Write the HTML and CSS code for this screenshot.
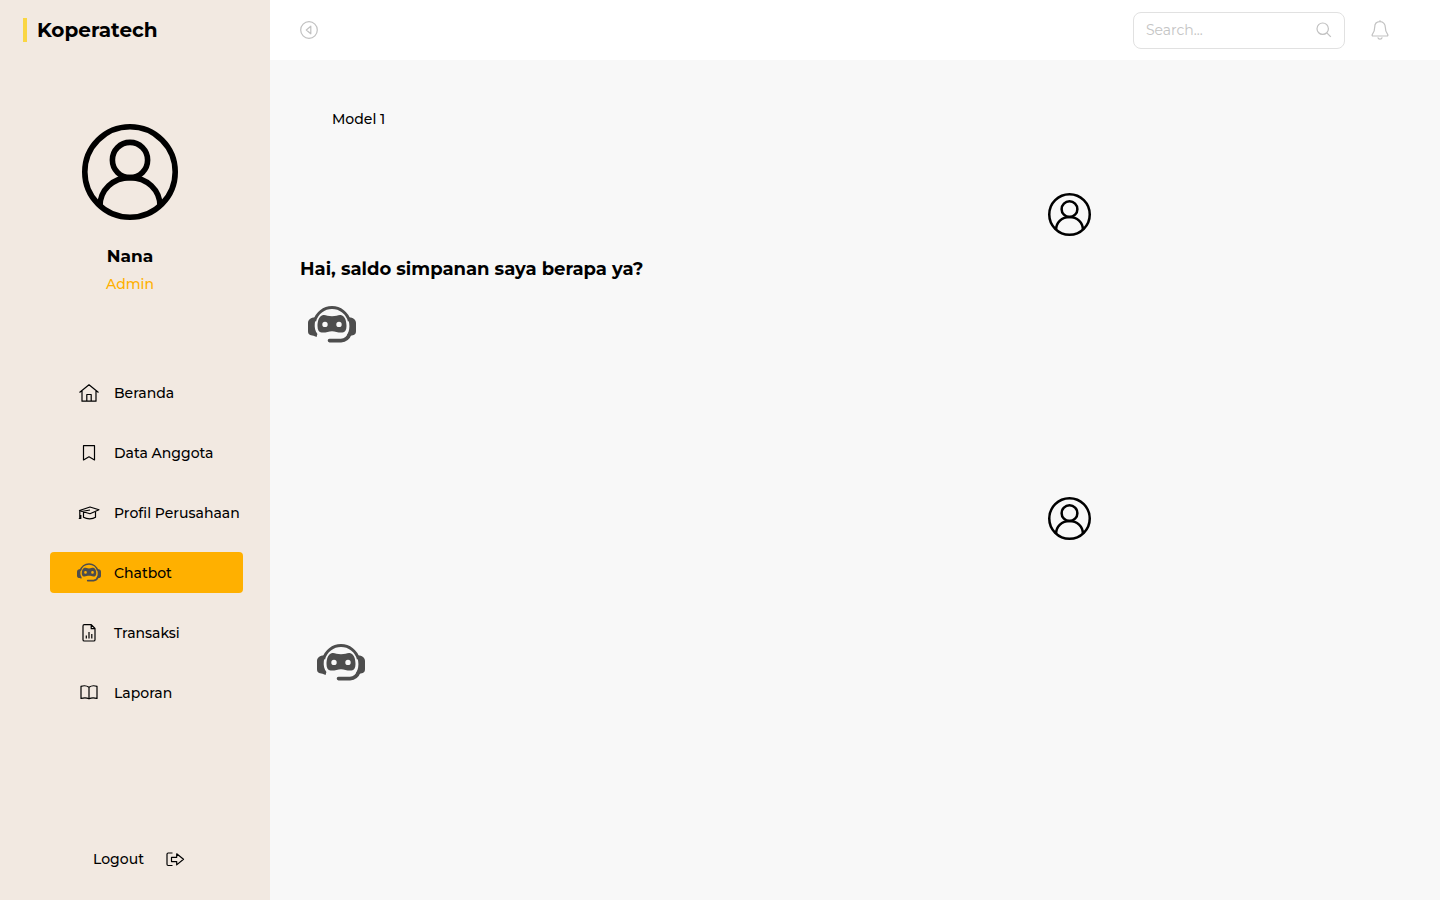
FILE: index.html
```html
<!DOCTYPE html>
<html lang="id">
<head>
<meta charset="utf-8">
<meta name="viewport" content="width=device-width, initial-scale=1">
<title>Koperatech</title>
<link rel="stylesheet" href="styles.css">
</head>
<body>
<svg class="symbols" aria-hidden="true">
  <symbol id="user" viewBox="0 0 96 96">
    <g fill="none" stroke="currentColor" stroke-width="5.6">
      <circle cx="48" cy="48" r="45.2"/>
      <circle cx="48" cy="36" r="17.6"/>
      <path d="M18 82C18 66 31 53.6 48 53.6S78 66 78 82"/>
    </g>
  </symbol>
  <symbol id="bot" viewBox="0 0 48 37">
    <path fill="none" stroke="currentColor" stroke-width="3" d="M6.600 15A18 18 0 0 1 41.400 15"/>
    <path fill="currentColor" d="M7 11.500C3 11.500 0 13.500 0 17v8c0 3.500 2 4.500 5.500 4.700L8.600 31l.8-3C7 25 6.400 21 6.800 17.500c.2-2 .6-3 1.200-5zM41 11.500c4 0 7 2 7 5.500v8c0 3.500-2 4.500-5.500 4.700L39 29c2.200-3 2.800-8 2.200-11.500-.2-2-.6-3-1.200-5z"/>
    <path fill="none" stroke="currentColor" stroke-width="3.600" stroke-linecap="round" d="M42 27.500C40.500 31.500 37.500 34.200 33 34.600H21.500"/>
    <path fill="currentColor" fill-rule="evenodd" d="M14 9.500c3-1.500 5 .8 10 .8s7-2.300 10-.8c3 1.200 4.500 5.500 4.500 10.500 0 4-1.500 6.300-4 6.500-4 .5-7-1.300-10.500-1.300s-6.500 1.800-10.500 1.300C11 26.300 9.500 24 9.500 20c0-5 1.500-9.300 4.500-10.500zM17 15.700a2.700 2.700 0 1 0 0 5.400 2.700 2.700 0 0 0 0-5.400zM31 15.700a2.700 2.700 0 1 0 0 5.400 2.700 2.700 0 0 0 0-5.400z"/>
  </symbol>
</svg>
<div class="app">
  <aside class="sidebar">
    <div class="brand">Koperatech</div>
    <div class="profile">
      <svg class="avatar" role="img" aria-label="Nana"><use href="#user"/></svg>
      <div class="name">Nana</div>
      <div class="role">Admin</div>
    </div>
    <nav class="menu">
      <a class="item" href="#"><span class="icon"><svg width="20" height="18" viewBox="0 0 20 18"><path d="M.5 8.500 10 .8l9.500 7.700M3 6.500v10.700h14V6.500M7.800 17v-6.500h4.400V17"/></svg></span>Beranda</a>
      <a class="item" href="#"><span class="icon"><svg width="14" height="16" viewBox="0 0 14 16"><path d="M1.500.7h11v14.200L7 11.800l-5.500 3.100z"/></svg></span>Data Anggota</a>
      <a class="item" href="#"><span class="icon"><svg width="22" height="14" viewBox="0 0 22 14"><path d="M1.500 4.500 12 1l9 2.700-9 4-10-3zM1.800 4.800V12M.8 12.500h2V9M5.500 6.300v5c3.500 2 9 2 12 0v-6M3.500 5.500 12 4"/></svg></span>Profil Perusahaan</a>
      <a class="item active" href="#" aria-current="page"><span class="icon"><svg class="bot-small"><use href="#bot"/></svg></span>Chatbot</a>
      <a class="item" href="#"><span class="icon"><svg width="14" height="18" viewBox="0 0 14 18"><path d="M1 2q0-1.300 1.300-1.300h7L13 4.500v11.200q0 1.300-1.300 1.300H2.300Q1 17 1 15.700zM9.200.8v3.900H13M4.300 14.500v-3M7 14.500V8M9.800 14.500V10"/></svg></span>Transaksi</a>
      <a class="item" href="#"><span class="icon"><svg width="18" height="15" viewBox="0 0 18 15"><path d="M9 2.200Q5.500-.2 1 1.400V13.500Q5.500 12 9 13.800 12.500 12 17 13.500V1.400Q12.500-.2 9 2.200zV13.800"/></svg></span>Laporan</a>
    </nav>
    <a class="logout" href="#">Logout<svg width="19" height="15" viewBox="0 0 19 15"><path d="M6.500 1H2.200Q1 1 1 2.200v10.100q0 1.200 1.200 1.200h4.300M5.500 5.300h5.200V1.800l6.800 5.500-6.800 5.600V9.600H5.500z"/></svg></a>
  </aside>
  <div class="page">
    <header class="topbar">
      <button class="icon-button" type="button" aria-label="Tutup menu"><svg width="18" height="18" viewBox="0 0 18 18"><circle cx="9" cy="9" r="8.300"/><path d="M10.800 5.200v7.600L6.300 9z"/></svg></button>
      <div class="tools">
        <label class="search">
          <input type="search" placeholder="Search..." aria-label="Search">
          <svg width="16" height="16" viewBox="0 0 16 16"><circle cx="6.700" cy="6.700" r="5.700"/><path d="m10.800 10.800 4 4"/></svg>
        </label>
        <button class="icon-button" type="button" aria-label="Notifikasi"><svg width="18" height="20" viewBox="0 0 18 20"><path d="M9 .3v1.400M9 1.700c-3.400 0-5.300 2.500-5.300 5.600 0 3.700-.9 5.200-2.200 6.800-.8 1.100-.4 1.900.6 1.900h13.800c1 0 1.400-.8.6-1.900-1.300-1.600-2.200-3.100-2.200-6.800 0-3.100-1.900-5.600-5.300-5.600zM6.800 17.300q.4 1.900 2.200 1.900t2.200-1.900"/></svg></button>
      </div>
    </header>
    <main class="chat">
      <div class="model">Model 1</div>
      <svg class="user" role="img" aria-label="Nana"><use href="#user"/></svg>
      <h1 class="message">Hai, saldo simpanan saya berapa ya?</h1>
      <svg class="bot" role="img" aria-label="Chatbot"><use href="#bot"/></svg>
      <svg class="user later" role="img" aria-label="Nana"><use href="#user"/></svg>
      <svg class="bot reply" role="img" aria-label="Chatbot"><use href="#bot"/></svg>
    </main>
  </div>
</div>
</body>
</html>
```

FILE: styles.css
```css
* { box-sizing: border-box; }
body {
  margin: 0;
  font: 500 14px/20px Montserrat, Inter, sans-serif;
  color: #000;
}
a { color: inherit; text-decoration: none; }
svg { display: block; flex: none; }
.symbols { position: absolute; width: 0; height: 0; }
.app { display: flex; min-height: 100vh; }
.sidebar {
  width: 270px;
  flex: none;
  display: flex;
  flex-direction: column;
  background: #f2e9e1;
}
.brand {
  display: flex;
  align-items: center;
  gap: 10px;
  height: 60px;
  padding-left: 23px;
  font-size: 20px;
  font-weight: 700;
}
.brand::before {
  content: "";
  width: 4px;
  height: 24px;
  background: #fad643;
}
.profile {
  display: flex;
  flex-direction: column;
  align-items: center;
  padding: 64px 10px 0 0;
}
.avatar { width: 96px; height: 96px; }
.name {
  margin-top: 24px;
  font-size: 17px;
  line-height: 24px;
  font-weight: 700;
}
.role { margin-top: 6px; color: #ffb000; }
.menu {
  display: flex;
  flex-direction: column;
  gap: 19px;
  padding: 78px 27px 0 50px;
}
.item {
  display: flex;
  align-items: center;
  gap: 12px;
  height: 41px;
  padding-left: 26px;
  border-radius: 4px;
  white-space: nowrap;
}
.active { background: #ffb000; }
.icon { display: flex; justify-content: center; width: 26px; }
.icon svg, .logout svg { fill: none; stroke: #000; stroke-width: 1.2; stroke-linejoin: round; }
.icon .bot-small { width: 24px; height: 19px; stroke: none; color: #4d4d4d; }
.logout {
  display: flex;
  align-items: center;
  gap: 22px;
  margin: auto 0 31px 93px;
}
.page { flex: 1; display: flex; flex-direction: column; background: #f8f8f8; }
.topbar {
  display: flex;
  align-items: center;
  justify-content: space-between;
  height: 60px;
  padding: 0 51px 0 30px;
  background: #fff;
}
.tools { display: flex; align-items: center; gap: 26px; }
.icon-button { padding: 0; border: 0; background: none; cursor: pointer; }
.topbar svg { fill: none; stroke: #c1c1c1; stroke-width: 1.2; stroke-linejoin: round; }
.search {
  display: flex;
  align-items: center;
  width: 212px;
  height: 37px;
  padding: 0 12px;
  border: 1px solid #e1e1e1;
  border-radius: 8px;
}
.search input {
  flex: 1;
  min-width: 0;
  padding: 0;
  border: 0;
  outline: 0;
  background: none;
  font: inherit;
  font-weight: 400;
}
.search input::placeholder { color: #c4c4c4; opacity: 1; }
.chat { flex: 1; display: flex; flex-direction: column; padding: 49px 30px; }
.model { margin-left: 32px; }
.user { width: 43px; height: 43px; margin: 64px 319px 0 0; align-self: flex-end; }
.message { margin: 21px 0 0; font-size: 18px; line-height: 24px; font-weight: 700; }
.bot { width: 48px; height: 37px; margin: 25px 0 0 8px; color: #4d4d4d; }
.later { margin-top: 154px; }
.reply { margin: 104px 0 0 17px; }
```
